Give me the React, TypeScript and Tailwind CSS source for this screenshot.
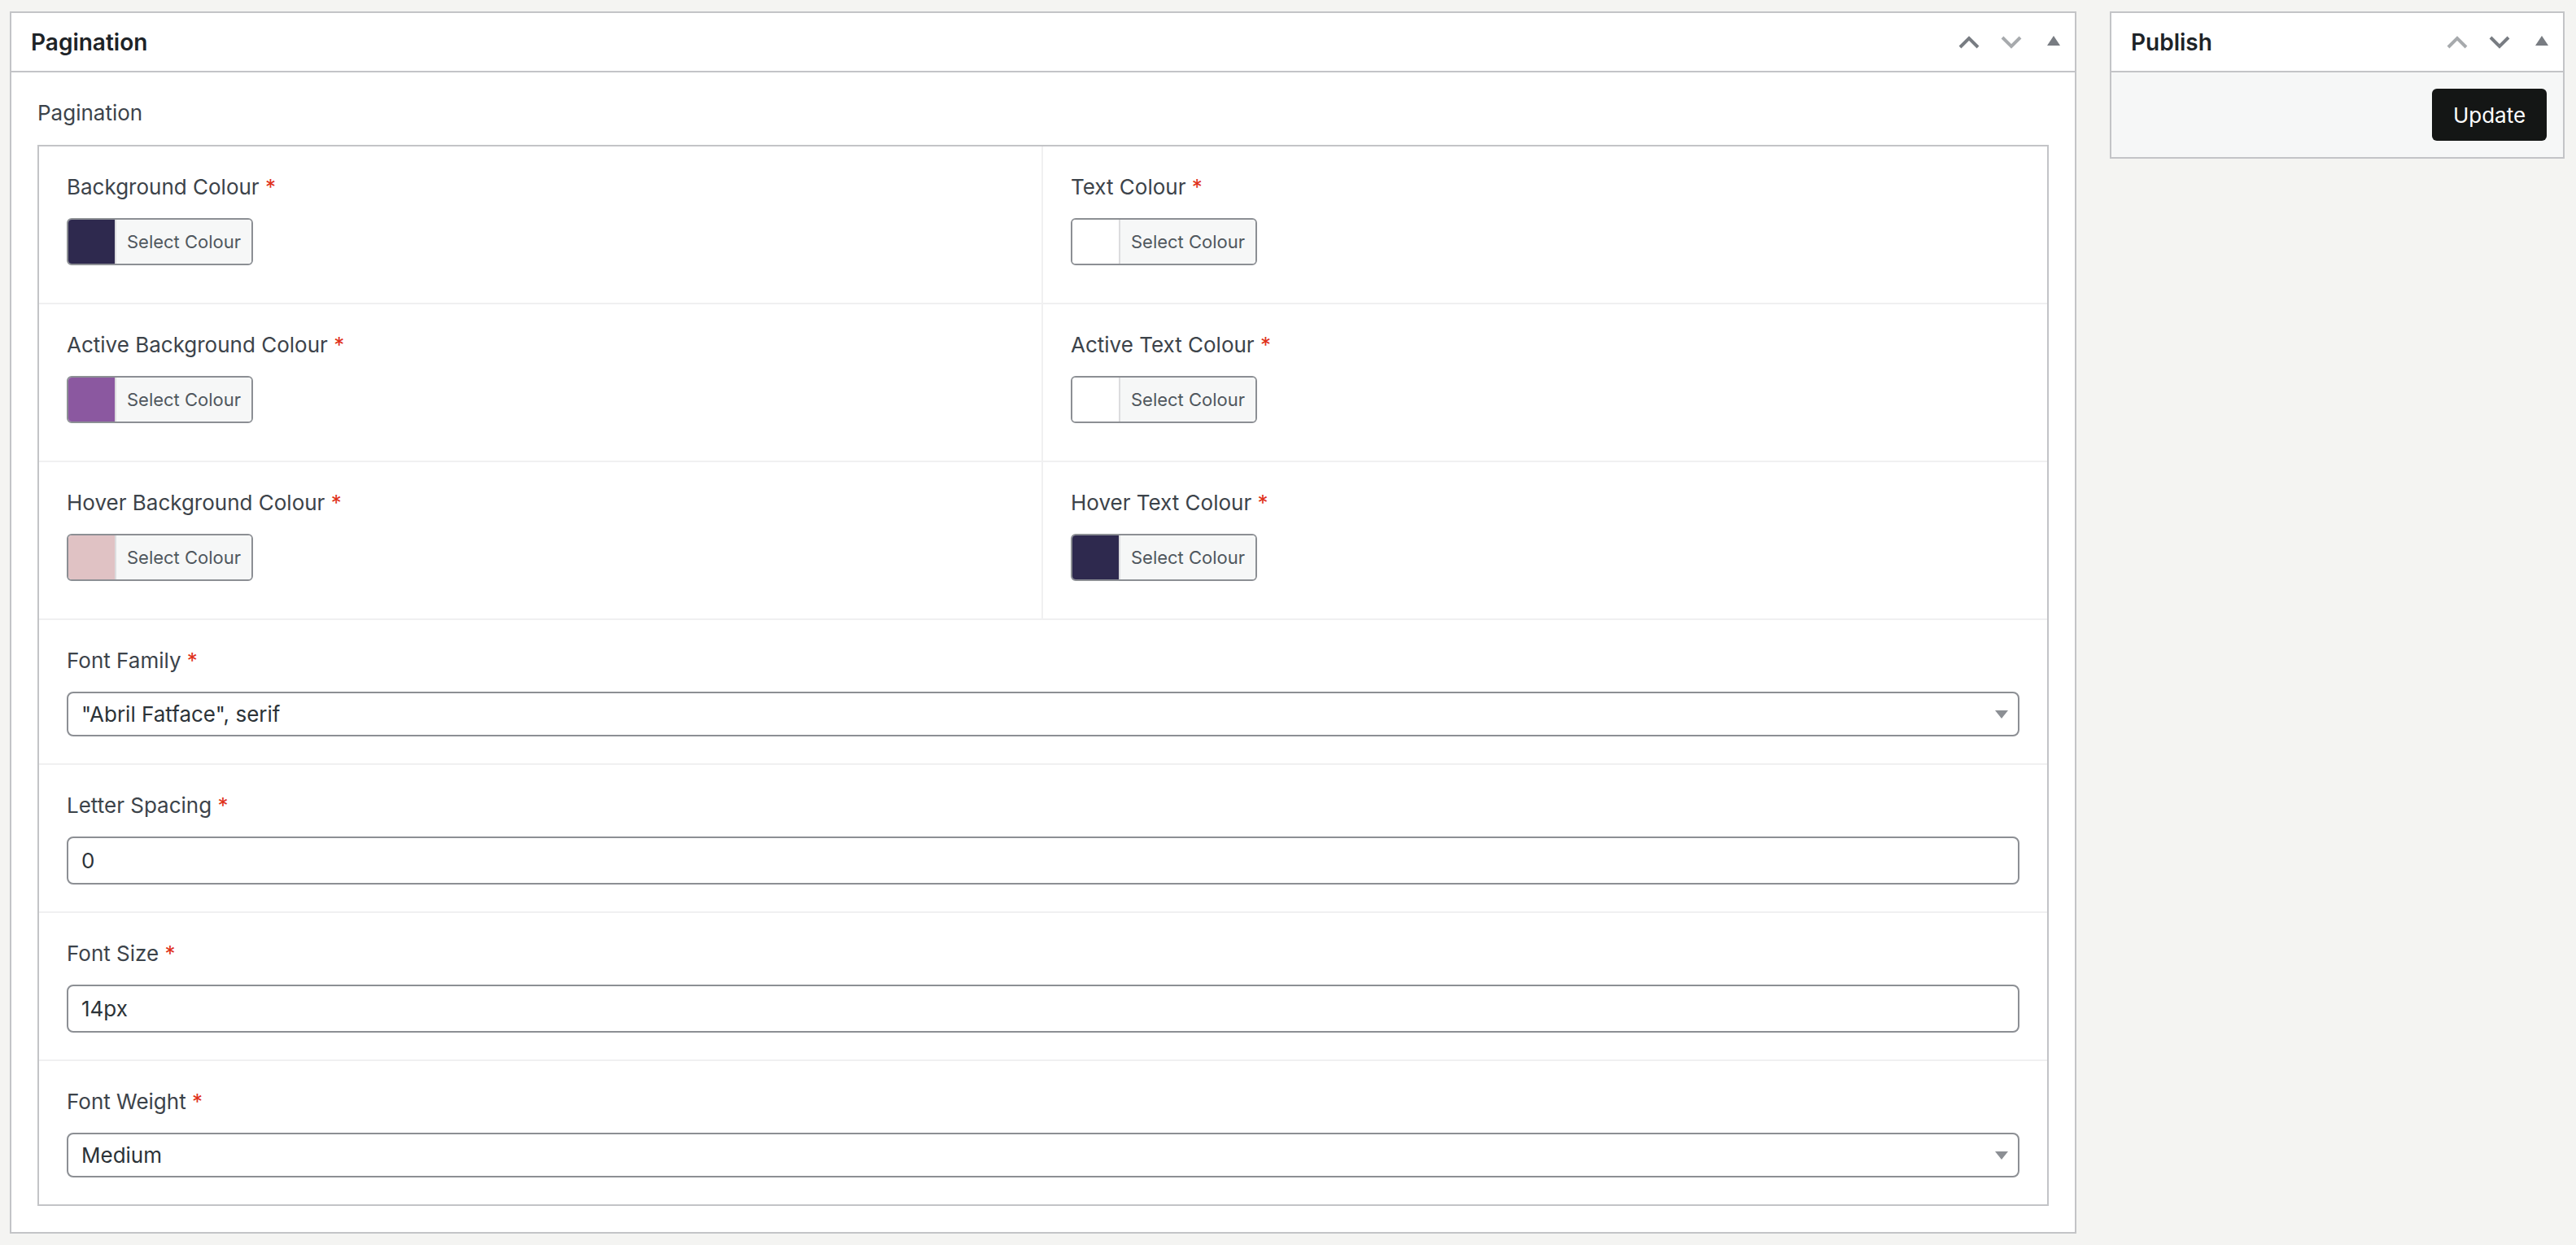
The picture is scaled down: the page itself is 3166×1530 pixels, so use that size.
import React from "react";

// Chevron / toggle glyphs used in the postbox headers
const ChevronUp = ({ color }: { color: string }) => (
  <svg width="26" height="16" viewBox="0 0 26 16" fill="none">
    <polyline points="2,14 13,3 24,14" stroke={color} strokeWidth="4" />
  </svg>
);

const ChevronDown = ({ color }: { color: string }) => (
  <svg width="26" height="16" viewBox="0 0 26 16" fill="none">
    <polyline points="2,2 13,13 24,2" stroke={color} strokeWidth="4" />
  </svg>
);

const Toggle = () => (
  <svg width="16" height="12" viewBox="0 0 16 12">
    <polygon points="8,0 16,12 0,12" fill="#787c82" />
  </svg>
);

interface HandleProps {
  upColor: string;
  downColor: string;
}

const Handles = ({ upColor, downColor }: HandleProps) => (
  <div className="flex h-full">
    <button className="w-[52px] h-full flex items-center justify-center">
      <ChevronUp color={upColor} />
    </button>
    <button className="w-[52px] h-full flex items-center justify-center">
      <ChevronDown color={downColor} />
    </button>
    <button className="w-[52px] h-full flex items-center justify-center pb-[4px]">
      <Toggle />
    </button>
  </div>
);

const Label = ({ text }: { text: string }) => (
  <div className="h-[36px] leading-[36px] text-[26px] text-[#3c434a]">
    {text} <span className="text-[#e0321b]">*</span>
  </div>
);

const ColourField = ({ label, swatch }: { label: string; swatch: string }) => (
  <div className="pt-[32px] pb-[46px] px-[34px]">
    <Label text={label} />
    <div className="mt-[20px] flex w-[229px] h-[58px] border-2 border-[#8c8f94] rounded-[6px] overflow-hidden">
      <div className="w-[59px] h-full border-r-2 border-[#dcdcde]" style={{ backgroundColor: swatch }} />
      <div className="flex-1 bg-[#f6f7f7] flex items-center justify-center text-[22px] text-[#50575e]">
        Select Colour
      </div>
    </div>
  </div>
);

const SelectField = ({ label, value, last }: { label: string; value: string; last?: boolean }) => (
  <div className={"border-t-2 border-[#f0f0f1] pt-[32px] px-[34px] " + (last ? "pb-[33px]" : "pb-[33px]")}>
    <Label text={label} />
    <div className="mt-[20px] h-[55px] border-2 border-[#8c8f94] rounded-[8px] bg-white flex items-center justify-between pl-[16px] pr-[12px]">
      <span className="text-[26px] text-[#2c3338]">{value}</span>
      <svg width="16" height="10" viewBox="0 0 16 10">
        <polygon points="0,0 16,0 8,10" fill="#8c8f94" />
      </svg>
    </div>
  </div>
);

const InputField = ({ label, value }: { label: string; value: string }) => (
  <div className="border-t-2 border-[#f0f0f1] pt-[32px] pb-[33px] px-[34px]">
    <Label text={label} />
    <div className="mt-[20px] h-[59px] border-2 border-[#8c8f94] rounded-[8px] bg-white flex items-center pl-[16px]">
      <span className="text-[26px] text-[#2c3338]">{value}</span>
    </div>
  </div>
);

const colourRows = [
  [
    { label: "Background Colour", swatch: "#2e294e" },
    { label: "Text Colour", swatch: "#ffffff" },
  ],
  [
    { label: "Active Background Colour", swatch: "#8b58a0" },
    { label: "Active Text Colour", swatch: "#ffffff" },
  ],
  [
    { label: "Hover Background Colour", swatch: "#e0c2c4" },
    { label: "Hover Text Colour", swatch: "#2e294e" },
  ],
];

export default function App() {
  return (
    <div
      className="min-h-screen bg-[#f4f4f2] pt-[14px] pl-[12px] pr-[14px] flex items-start gap-[41px]"
      style={{ fontFamily: "Inter, 'Noto Sans', sans-serif" }}
    >
      {/* Main postbox */}
      <div className="flex-1 bg-white border-2 border-[#c3c4c7]">
        <div className="h-[73px] border-b-2 border-[#c3c4c7] flex items-center justify-between pl-[24px]">
          <h2 className="text-[28px] font-semibold text-[#1d2327]">Pagination</h2>
          <Handles upColor="#787c82" downColor="#a7aaad" />
        </div>
        <div className="pt-[32px] px-[32px] pb-[32px]">
          <div className="h-[36px] leading-[36px] text-[26px] text-[#3c434a] mb-[21px]">Pagination</div>
          <div className="border-2 border-[#c3c4c7]">
            {colourRows.map((row, i) => (
              <div key={i} className={"grid grid-cols-2 " + (i > 0 ? "border-t-2 border-[#f0f0f1]" : "")}>
                <div className="border-r-2 border-[#f0f0f1]">
                  <ColourField label={row[0].label} swatch={row[0].swatch} />
                </div>
                <div>
                  <ColourField label={row[1].label} swatch={row[1].swatch} />
                </div>
              </div>
            ))}
            <SelectField label="Font Family" value={'"Abril Fatface", serif'} />
            <InputField label="Letter Spacing" value="0" />
            <InputField label="Font Size" value="14px" />
            <SelectField label="Font Weight" value="Medium" last />
          </div>
        </div>
      </div>

      {/* Publish sidebar box */}
      <div className="w-[559px] bg-white border-2 border-[#c3c4c7]">
        <div className="h-[73px] border-b-2 border-[#c3c4c7] flex items-center justify-between pl-[24px]">
          <h2 className="text-[28px] font-semibold text-[#1d2327]">Publish</h2>
          <Handles upColor="#a7aaad" downColor="#787c82" />
        </div>
        <div className="bg-[#f6f7f7] h-[104px] flex items-center justify-end pr-[20px]">
          <button className="w-[141px] h-[64px] rounded-[6px] bg-[#141615] text-white text-[26px]">
            Update
          </button>
        </div>
      </div>
    </div>
  );
}
